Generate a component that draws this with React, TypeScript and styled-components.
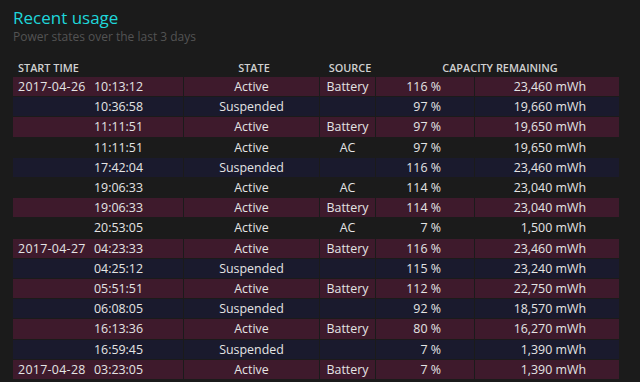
import * as React from "react";
import styled, { createGlobalStyle, css } from "styled-components";

type Kind = "active" | "suspended";

interface Entry {
  date?: string;
  time: string;
  state: string;
  source: string;
  percent: string;
  energy: string;
}

const entries: Entry[] = [
  { date: "2017-04-26", time: "10:13:12", state: "Active", source: "Battery", percent: "116 %", energy: "23,460 mWh" },
  { time: "10:36:58", state: "Suspended", source: "", percent: "97 %", energy: "19,660 mWh" },
  { time: "11:11:51", state: "Active", source: "Battery", percent: "97 %", energy: "19,650 mWh" },
  { time: "11:11:51", state: "Active", source: "AC", percent: "97 %", energy: "19,650 mWh" },
  { time: "17:42:04", state: "Suspended", source: "", percent: "116 %", energy: "23,460 mWh" },
  { time: "19:06:33", state: "Active", source: "AC", percent: "114 %", energy: "23,040 mWh" },
  { time: "19:06:33", state: "Active", source: "Battery", percent: "114 %", energy: "23,040 mWh" },
  { time: "20:53:05", state: "Active", source: "AC", percent: "7 %", energy: "1,500 mWh" },
  { date: "2017-04-27", time: "04:23:33", state: "Active", source: "Battery", percent: "116 %", energy: "23,460 mWh" },
  { time: "04:25:12", state: "Suspended", source: "", percent: "115 %", energy: "23,240 mWh" },
  { time: "05:51:51", state: "Active", source: "Battery", percent: "112 %", energy: "22,750 mWh" },
  { time: "06:08:05", state: "Suspended", source: "", percent: "92 %", energy: "18,570 mWh" },
  { time: "16:13:36", state: "Active", source: "Battery", percent: "80 %", energy: "16,270 mWh" },
  { time: "16:59:45", state: "Suspended", source: "", percent: "7 %", energy: "1,390 mWh" },
  { date: "2017-04-28", time: "03:23:05", state: "Active", source: "Battery", percent: "7 %", energy: "1,390 mWh" }
];

// AC rows sit on the page colour, battery rows are maroon, sleep rows navy
function kindOf(entry: Entry): Kind | null {
  if (entry.state === "Suspended") return "suspended";
  if (entry.source === "Battery") return "active";
  return null;
}

const GlobalStyle = createGlobalStyle`
  html, body {
    margin: 0;
    padding: 0;
    background-color: #1b1b1b;
    overflow: hidden;
  }
`;

const Page = styled.div`
  width: 640px;
  height: 382px;
  box-sizing: border-box;
  padding: 7px 0 0 13px;
  font-family: "Open Sans", "Noto Sans", sans-serif;
  color: #e4e4e4;
  background-color: #1b1b1b;
  overflow: hidden;
`;

const Title = styled.h1`
  margin: 0;
  font-size: 17px;
  font-weight: 400;
  line-height: 22px;
  color: #1fd6da;
`;

const Subtitle = styled.div`
  font-size: 12px;
  line-height: 16px;
  color: #535353;
`;

const Table = styled.table`
  margin-top: 15px;
  border-collapse: separate;
  border-spacing: 1px;
  margin-left: -1px;
  width: 608px;
  font-size: 12.4px;
  table-layout: fixed;
`;

const HeaderCell = styled.th<{ align?: "left" | "center" }>`
  font-size: 10.9px;
  font-weight: 600;
  color: #d0d0d0;
  text-transform: uppercase;
  text-align: ${props => props.align || "center"};
  padding: 0 0 1px 5px;
  line-height: 14px;
`;

const Row = styled.tr<{ kind: Kind | null }>`
  ${props => {
    switch (props.kind) {
      case "active":
        return css`
          background-color: #3e1a2c;
        `;
      case "suspended":
        return css`
          background-color: #1a1a2d;
        `;
      default:
        return null;
    }
  }}
`;

const Cell = styled.td<{ align?: "center" | "right" }>`
  padding: 1px 33px 1px 5px;
  line-height: 17.2px;
  white-space: nowrap;
  text-align: ${props => props.align || "left"};
  ${props =>
    props.align === "center" &&
    css`
      padding: 1px 0;
    `}
`;

const StartCell = styled(Cell)`
  padding-right: 40px;
`;

const StartInner = styled.div`
  display: flex;
  justify-content: space-between;
`;

const DatePart = styled.span`
  letter-spacing: 0.3px;
`;

function App() {
  return (
    <Page>
      <GlobalStyle />
      <Title>Recent usage</Title>
      <Subtitle>Power states over the last 3 days</Subtitle>
      <Table>
        <colgroup>
          <col style={{ width: 170 }} />
          <col style={{ width: 135 }} />
          <col style={{ width: 55 }} />
          <col style={{ width: 98 }} />
          <col style={{ width: 144 }} />
        </colgroup>
        <thead>
          <tr>
            <HeaderCell align="left">Start time</HeaderCell>
            <HeaderCell>State</HeaderCell>
            <HeaderCell>Source</HeaderCell>
            <HeaderCell colSpan={2}>Capacity remaining</HeaderCell>
          </tr>
        </thead>
        <tbody>
          {entries.map((entry, index) => (
            <Row key={index} kind={kindOf(entry)}>
              <StartCell>
                <StartInner>
                  <DatePart>{entry.date || ""}</DatePart>
                  <span>{entry.time}</span>
                </StartInner>
              </StartCell>
              <Cell align="center">{entry.state}</Cell>
              <Cell align="center">{entry.source}</Cell>
              <Cell align="right">{entry.percent}</Cell>
              <Cell align="right">{entry.energy}</Cell>
            </Row>
          ))}
        </tbody>
      </Table>
    </Page>
  );
}

export default App;
